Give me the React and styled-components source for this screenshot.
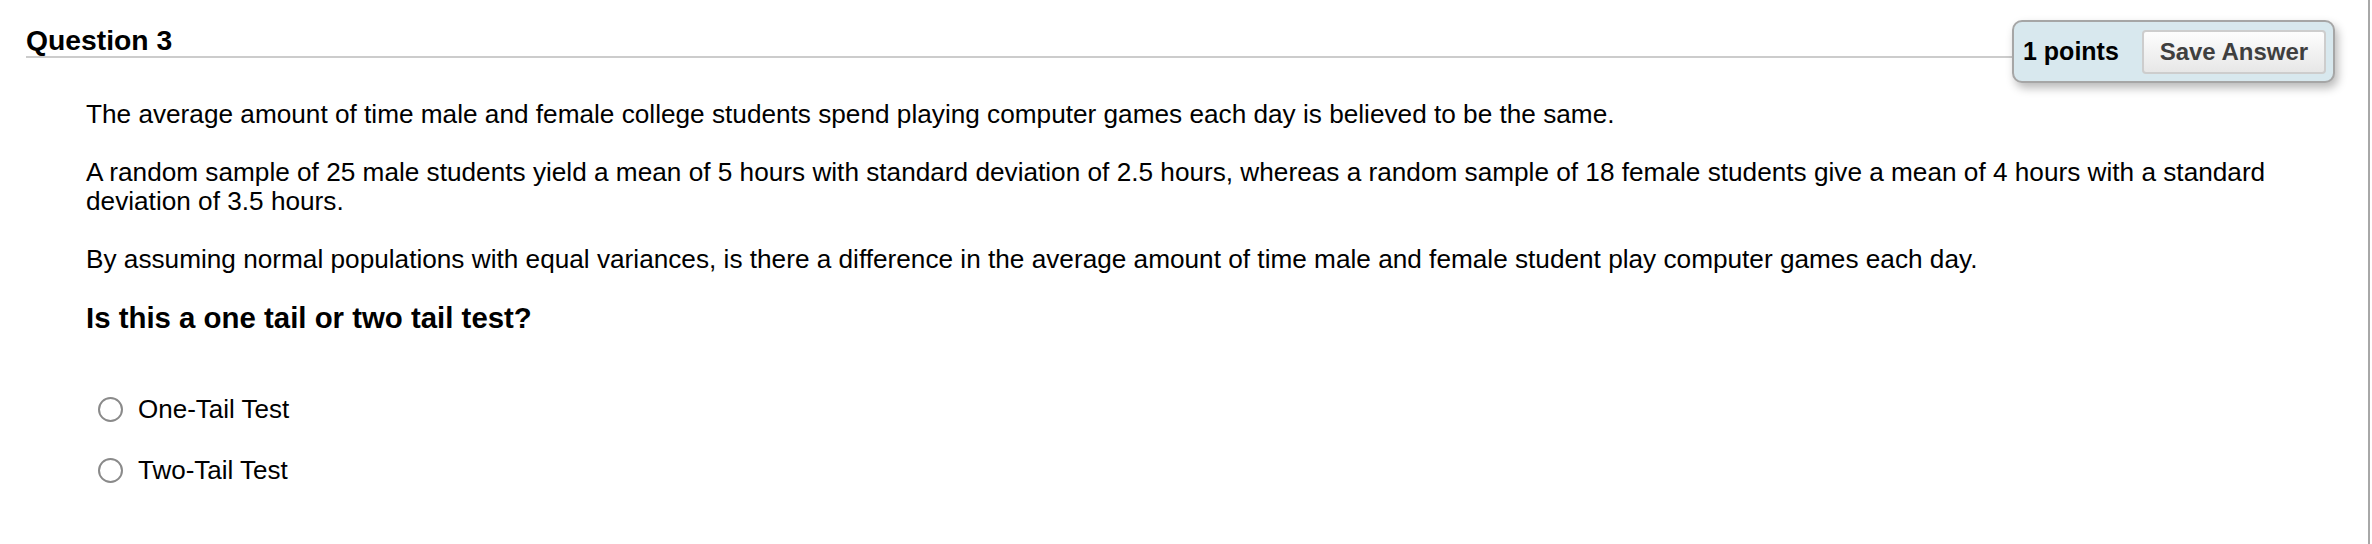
import React from "react";
import styled, { createGlobalStyle } from "styled-components";

const GlobalStyle = createGlobalStyle`
  html, body {
    margin: 0;
    padding: 0;
    background: #ffffff;
  }
  body {
    font-family: "Liberation Sans", Arial, Helvetica, sans-serif;
    color: #000;
  }
  * { box-sizing: border-box; }
`;

const Page = styled.div`
  width: 2370px;
  height: 544px;
  border-right: 2px solid #a8a8a8;
  background: #fff;
  overflow: hidden;
`;

const Header = styled.div`
  display: flex;
  align-items: flex-start;
  padding: 20px 33px 0 26px;
`;

const Title = styled.h2`
  flex: 1;
  margin: 0;
  padding: 4px 0 0;
  font-size: 28.3px;
  line-height: 32px;
  font-weight: 700;
  border-bottom: 2px solid #cccccc;
`;

const PointsBox = styled.div`
  display: flex;
  align-items: center;
  gap: 23px;
  width: 323px;
  height: 63px;
  padding: 0 7px 0 9px;
  background: #d8e8ee;
  border: 2px solid #a6a6a6;
  border-radius: 10px;
  box-shadow: 3px 5px 10px rgba(0, 0, 0, 0.28);
`;

const Points = styled.span`
  font-size: 25px;
  font-weight: 700;
  color: #000;
  white-space: nowrap;
`;

const SaveButton = styled.button`
  width: 185px;
  height: 44px;
  margin-left: auto;
  padding: 0;
  font-family: "Liberation Sans", Arial, Helvetica, sans-serif;
  font-size: 24px;
  font-weight: 700;
  color: #3f3f3f;
  background: linear-gradient(#fdfdfd, #e7e7e7);
  border: 2px solid #cdcdcd;
  border-radius: 4px;
  cursor: pointer;
`;

const Content = styled.div`
  padding: 17px 44px 0 86px;
`;

const Paragraph = styled.p`
  margin: 0 0 29px;
  font-size: 26.2px;
  line-height: 29px;
`;

const Prompt = styled.h3`
  margin: -2px 0 0;
  font-size: 29.4px;
  line-height: 34px;
  font-weight: 700;
`;

const Options = styled.div`
  display: flex;
  flex-direction: column;
  gap: 21px;
  margin-top: 54px;
  padding-left: 12px;
`;

const Option = styled.label`
  display: flex;
  align-items: center;
  gap: 15px;
  height: 40px;
  font-family: "Liberation Sans", Arial, sans-serif;
  font-size: 26px;
  cursor: pointer;
`;

const Radio = styled.span`
  width: 25px;
  height: 25px;
  border-radius: 50%;
  border: 2px solid #8a8a8a;
  background: #fff;
  flex: none;
`;

export default function App() {
  return (
    <>
      <GlobalStyle />
      <Page>
        <Header>
          <Title>Question 3</Title>
          <PointsBox>
            <Points>1 points</Points>
            <SaveButton type="button">Save Answer</SaveButton>
          </PointsBox>
        </Header>
        <Content>
          <Paragraph>
            The average amount of time male and female college students spend playing computer games each day is believed to be the same.
          </Paragraph>
          <Paragraph>
            A random sample of 25 male students yield a mean of 5 hours with standard deviation of 2.5 hours, whereas a random sample of 18 female students give a mean of 4 hours with a standard deviation of 3.5 hours.
          </Paragraph>
          <Paragraph>
            By assuming normal populations with equal variances, is there a difference in the average amount of time male and female student play computer games each day.
          </Paragraph>
          <Prompt>Is this a one tail or two tail test?</Prompt>
          <Options>
            <Option>
              <Radio />
              One-Tail Test
            </Option>
            <Option>
              <Radio />
              Two-Tail Test
            </Option>
          </Options>
        </Content>
      </Page>
    </>
  );
}
